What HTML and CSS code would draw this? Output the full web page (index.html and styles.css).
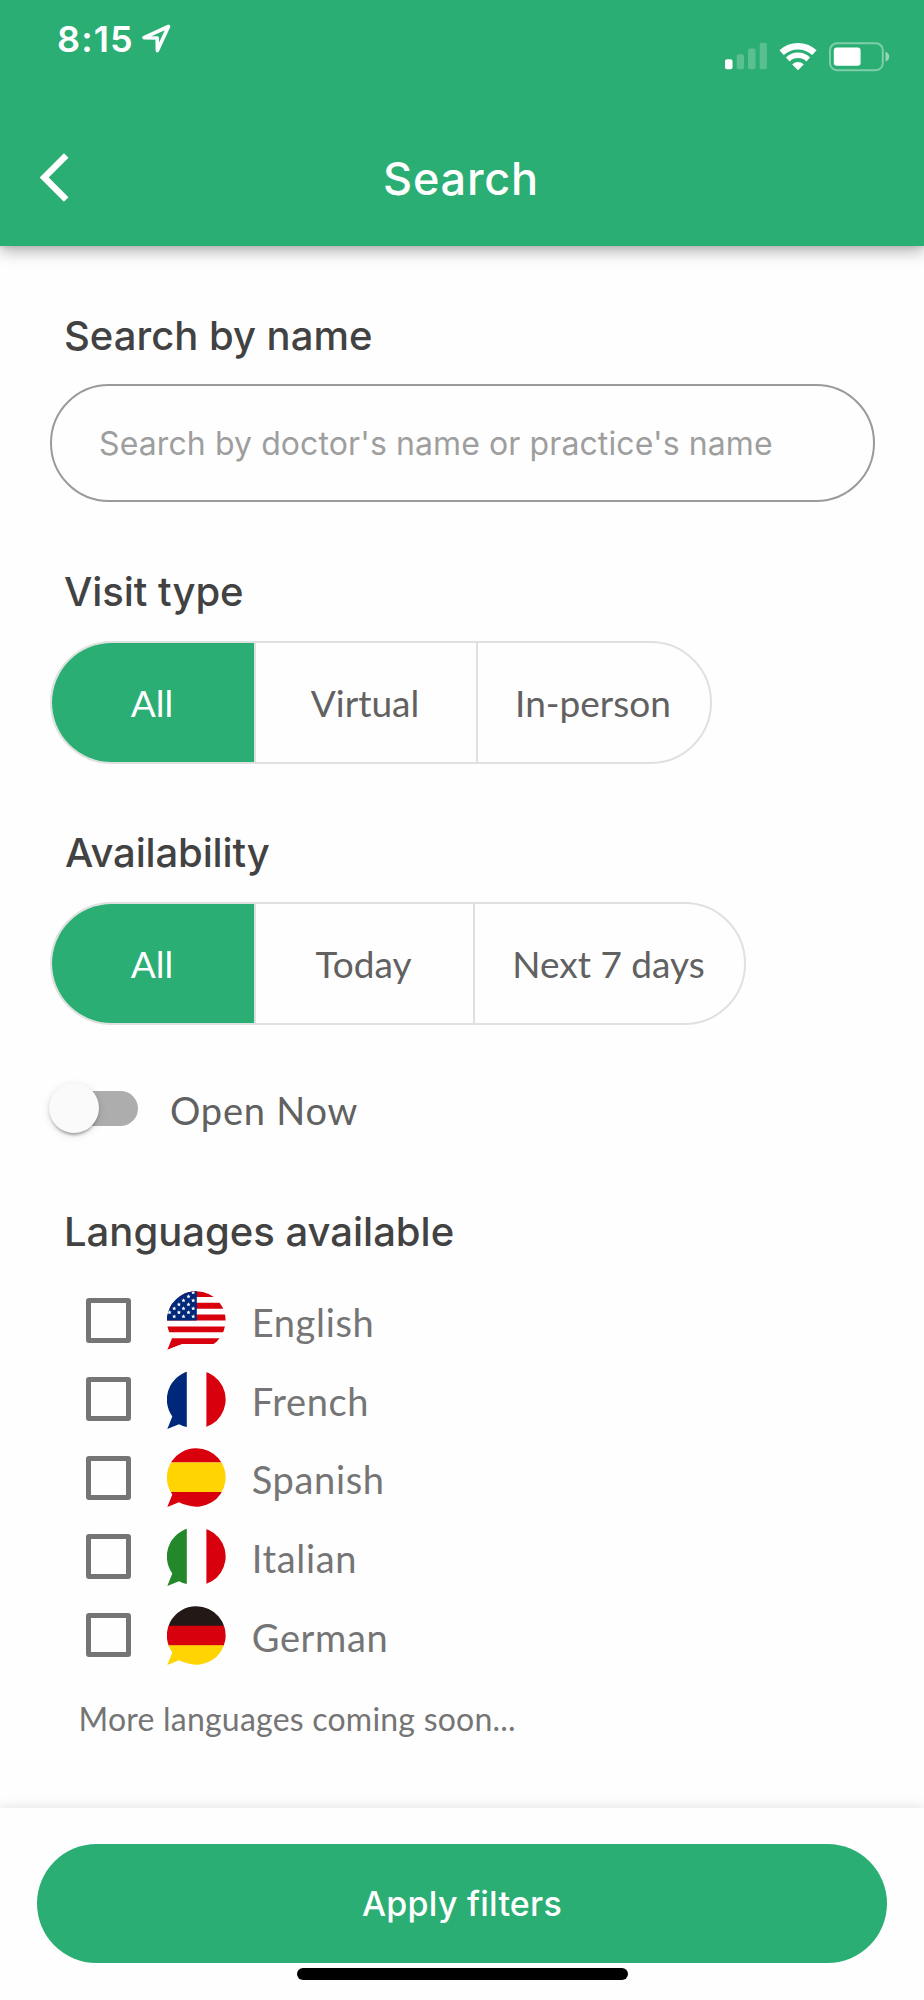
FILE: index.html
```html
<!DOCTYPE html>
<html lang="en">
<head>
<meta charset="utf-8">
<title>Search</title>
<link rel="stylesheet" href="styles.css">
</head>
<body>
<div class="app">
  <header class="header">
    <div class="status-bar">
      <div class="status-left">
        <span class="time">8:15</span>
        <svg class="location" width="32" height="32" viewBox="0 0 32 32">
          <path d="M28.5 3.5 4 14.6l13.2.4.2 12.6z"/>
        </svg>
      </div>
      <div class="status-right">
        <svg width="42" height="28" viewBox="0 0 42 28" fill="#fff">
          <rect x="0" y="17.3" width="7.5" height="10" rx="2"/>
          <g opacity=".22">
            <rect x="11.7" y="12.2" width="7.3" height="15.1" rx="2"/>
            <rect x="23" y="6.5" width="7.5" height="20.8" rx="2"/>
            <rect x="34.7" y=".8" width="7.2" height="26.5" rx="2"/>
          </g>
        </svg>
        <svg class="wifi" width="38" height="28" viewBox="0 0 38 28" fill="none" stroke="#fff">
          <path d="M2.6 9.7a24 24 0 0 1 32.8 0" stroke-width="6.4"/>
          <path d="M8.8 16.4a14.9 14.9 0 0 1 20.4 0" stroke-width="5.5"/>
          <path d="M13.6 21.4a8 8 0 0 1 10.8 0L19 27z" fill="#fff" stroke-width=".6" stroke-linejoin="round"/>
        </svg>
        <svg width="61" height="30" viewBox="0 0 61 30">
          <rect x="1" y="1.2" width="52.8" height="27" rx="7" fill="none" stroke="#fff" stroke-width="2" opacity=".4"/>
          <rect x="4.8" y="5.4" width="26.8" height="18.4" rx="3" fill="#fff"/>
          <path d="M56.5 9.8q3.7 1.4 3.7 4.9t-3.7 4.9z" fill="#fff" opacity=".5"/>
        </svg>
      </div>
    </div>
    <nav class="nav">
      <svg class="back" width="32" height="52" viewBox="0 0 32 52"><path d="M27.2 3.6 5.2 25.6l22 22"/></svg>
      <h1 class="title">Search</h1>
    </nav>
  </header>

  <main class="filters">
    <h2 class="heading">Search by name</h2>
    <input class="search" type="text" placeholder="Search by doctor's name or practice's name">

    <h2 class="heading heading-visit">Visit type</h2>
    <div class="segments visit">
      <button class="segment active">All</button>
      <button class="segment">Virtual</button>
      <button class="segment">In-person</button>
    </div>

    <h2 class="heading heading-availability">Availability</h2>
    <div class="segments availability">
      <button class="segment active">All</button>
      <button class="segment">Today</button>
      <button class="segment">Next 7 days</button>
    </div>

    <label class="open-now">
      <span class="switch"><span class="thumb"></span></span>
      <span class="open-label">Open Now</span>
    </label>

    <h2 class="heading heading-languages">Languages available</h2>
    <svg class="defs" width="0" height="0">
      <defs>
        <clipPath id="bubble">
          <path d="M29.5 .3a29.2 29.2 0 1 1-9 57Q15.5 56 12 54.2L.3 59 5.3 46.5A29.2 29.2 0 0 1 29.5 .3z"/>
        </clipPath>
        <path id="star" d="M0-2.1.6-.7 2.1-.6 1 .4 1.3 1.9 0 1.1-1.3 1.9-1 .4-2.1-.6-.6-.7z"/>
      </defs>
    </svg>
    <div class="languages">
      <label class="language"><span class="checkbox"></span>
        <svg class="flag" width="59" height="59" viewBox="0 0 59 59"><g clip-path="url(#bubble)">
          <path fill="#d8000c" d="M0 0h59v5.9H0zM0 11.8h59v5.9H0zM0 23.6h59v5.9H0zM0 35.4h59v5.9H0zM0 47.2h59V53H15L0 59z"/>
          <path fill="#00287a" d="M0 0h29.8v29.5H0z"/>
          <g fill="#fff">
            <use href="#star" x="7.2" y="25.4"/><use href="#star" x="16.5" y="25.4"/><use href="#star" x="26.2" y="25.4"/>
            <use href="#star" x="2.5" y="21.3"/><use href="#star" x="11.9" y="21.3"/><use href="#star" x="21.5" y="21.3"/>
            <use href="#star" x="7.2" y="17.4"/><use href="#star" x="16.5" y="17.4"/><use href="#star" x="26.2" y="17.4"/>
            <use href="#star" x="11.9" y="13.4"/><use href="#star" x="21.5" y="13.4"/>
            <use href="#star" x="16.5" y="9.4"/><use href="#star" x="26.2" y="9.4"/>
            <use href="#star" x="21.5" y="5.4"/><use href="#star" x="26.2" y="1.4"/>
          </g></g></svg>
        <span class="language-name">English</span></label>
      <label class="language"><span class="checkbox"></span>
        <svg class="flag" width="59" height="59" viewBox="0 0 59 59"><g clip-path="url(#bubble)">
          <path fill="#00287a" d="M0 0h19.8v59H0z"/><path fill="#d8000c" d="M39.4 0H59v59H39.4z"/></g></svg>
        <span class="language-name">French</span></label>
      <label class="language"><span class="checkbox"></span>
        <svg class="flag" width="59" height="59" viewBox="0 0 59 59"><g clip-path="url(#bubble)">
          <path fill="#d8000c" d="M0 0h59v14.6H0zM0 44h59v15H0z"/><path fill="#ffd400" d="M0 14.6h59V44H0z"/></g></svg>
        <span class="language-name">Spanish</span></label>
      <label class="language"><span class="checkbox"></span>
        <svg class="flag" width="59" height="59" viewBox="0 0 59 59"><g clip-path="url(#bubble)">
          <path fill="#23882a" d="M0 0h19.8v59H0z"/><path fill="#d8000c" d="M39.4 0H59v59H39.4z"/></g></svg>
        <span class="language-name">Italian</span></label>
      <label class="language"><span class="checkbox"></span>
        <svg class="flag" width="59" height="59" viewBox="0 0 59 59"><g clip-path="url(#bubble)">
          <path fill="#231815" d="M0 0h59v20H0z"/><path fill="#d8000c" d="M0 19.7h59v20H0z"/><path fill="#ffd400" d="M0 39.2h59V59H0z"/></g></svg>
        <span class="language-name">German</span></label>
    </div>
    <p class="more">More languages coming soon...</p>
  </main>

  <footer class="footer">
    <button class="apply">Apply filters</button>
    <div class="home-indicator"></div>
  </footer>
</div>
</body>
</html>
```

FILE: styles.css
```css
* { box-sizing: border-box; }

body {
  margin: 0;
  background: #fefefe;
  font-family: Inter, "Liberation Sans", sans-serif;
}

.app {
  display: flex;
  flex-direction: column;
  width: 924px;
  height: 2000px;
  overflow: hidden;
}

.header {
  flex: none;
  height: 246px;
  background: #2bae74;
  box-shadow: 0 6px 14px rgba(0, 0, 0, .28), 0 2px 4px rgba(0, 0, 0, .08);
  color: #fff;
}

.status-bar {
  display: flex;
  justify-content: space-between;
  height: 114px;
  padding: 0 34.500px 0 57px;
}

.status-left {
  display: flex;
  align-items: center;
  gap: 6px;
  height: 78px;
}

.time {
  font-size: 36px;
  font-weight: 600;
  letter-spacing: 1.1px;
}

.location {
  fill: none;
  stroke: #fff;
  stroke-width: 3.6;
  stroke-linejoin: round;
}

.status-right {
  display: flex;
  align-items: flex-start;
  padding-top: 42px;
}

.wifi { margin: 1px 12px 0; }

.nav {
  display: grid;
  grid-template-columns: 100px 1fr 100px;
  align-items: center;
  height: 128px;
}

.back {
  margin-left: 39px;
  fill: none;
  stroke: #fff;
  stroke-width: 6.4;
}

.title {
  margin: 1px 2px 0 0;
  font-size: 45px;
  font-weight: 500;
  letter-spacing: .8px;
  line-height: 54px;
  text-align: center;
}

.filters {
  flex: 1;
  padding: 66px 49px 0 50px;
}

.heading {
  margin: 0;
  padding-left: 14px;
  color: #424242;
  font-size: 40px;
  font-weight: 500;
  line-height: 48px;
}

.search {
  display: block;
  width: 825px;
  height: 118px;
  margin-top: 24px;
  padding: 0 47px;
  border: 2px solid #9a9a9a;
  border-radius: 59px;
  background: transparent;
  color: #424242;
  font: 400 32px Inter, "Liberation Sans", sans-serif;
  letter-spacing: .1px;
}

.search::placeholder {
  color: #9e9e9e;
  opacity: 1;
}

.heading-visit {
  margin-top: 66px;
  letter-spacing: -.05px;
}

.segments {
  display: grid;
  height: 123px;
  overflow: hidden;
  border: 2px solid #e0e0e0;
  border-radius: 62px;
}

.visit {
  width: 662px;
  margin-top: 25px;
  grid-template-columns: 204px 222px 232px;
}

.availability {
  width: 696px;
  margin-top: 25px;
  grid-template-columns: 204px 219px 269px;
}

.segment {
  padding: 1px 2px 0 0;
  border: 0;
  border-right: 2px solid #e0e0e0;
  background: transparent;
  color: #616161;
  font: 400 37px/44px Lato, "Liberation Sans", sans-serif;
}

.segment:last-child { border-right: 0; }

.segment.active {
  background: #2bae74;
  color: #fff;
}

.heading-availability {
  margin-top: 65px;
  padding-left: 15px;
  letter-spacing: -.15px;
}

.open-now {
  display: flex;
  align-items: center;
  height: 50px;
  margin-top: 58px;
}

.switch {
  display: flex;
  align-items: center;
  width: 83px;
  height: 35px;
  margin-left: 5px;
  border-radius: 18px;
  background: #adadad;
}

.thumb {
  flex: none;
  width: 50px;
  height: 50px;
  margin-left: -6px;
  border-radius: 50%;
  background: #fafafa;
  box-shadow: 0 5px 3px -3px rgba(0, 0, 0, .2), 0 2px 3px rgba(0, 0, 0, .14), 0 2px 8px rgba(0, 0, 0, .12);
}

.open-label {
  margin: 3px 0 0 32px;
  color: #616161;
  font: 400 38px/46px Lato, "Liberation Sans", sans-serif;
  letter-spacing: .8px;
}

.heading-languages { margin-top: 75px; }

.defs { display: block; }

.languages { margin-top: 25px; }

.language {
  display: flex;
  align-items: center;
  height: 78.7px;
  padding-left: 36.3px;
}

.checkbox {
  width: 44.4px;
  height: 44.4px;
  border: 5px solid #757575;
  border-radius: 3px;
}

.flag { margin-left: 36.5px; }

.language-name {
  margin: 3px 0 0 25.5px;
  color: #757575;
  font: 400 38px/46px Lato, "Liberation Sans", sans-serif;
  letter-spacing: .66px;
}

.more {
  margin: 25px 0 0 28.5px;
  color: #757575;
  font: 400 32px/40px Lato, "Liberation Sans", sans-serif;
  letter-spacing: .22px;
}

.footer {
  display: flex;
  flex-direction: column;
  align-items: center;
  flex: none;
  height: 192px;
  padding-top: 36px;
  background: #fefefe;
  box-shadow: 0 0 12px rgba(0, 0, 0, .13);
}

.apply {
  width: 850px;
  height: 119px;
  padding: 0;
  border: 0;
  border-radius: 60px;
  background: #2bae74;
  color: #fff;
  font: 550 34px/42px Inter, "Liberation Sans", sans-serif;
  letter-spacing: .25px;
}

.home-indicator {
  width: 331px;
  height: 12px;
  margin-top: 5px;
  border-radius: 6px;
  background: #000;
}
```
